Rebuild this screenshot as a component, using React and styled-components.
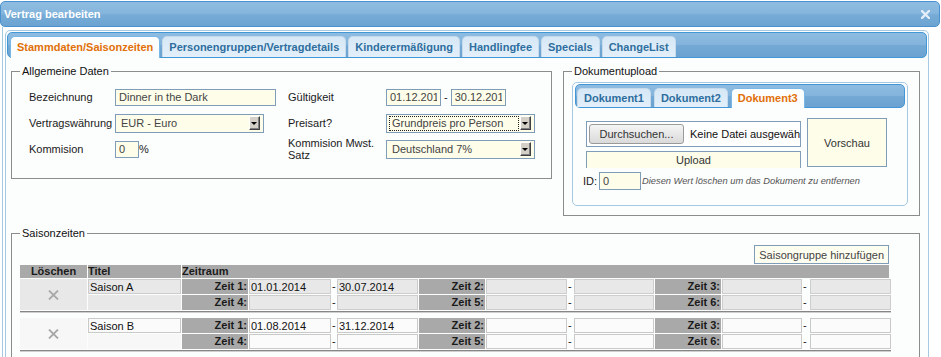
import React from "react";
import styled, { createGlobalStyle, css } from "styled-components";

const GlobalStyle = createGlobalStyle`
  * { box-sizing: border-box; }
  html, body { margin: 0; padding: 0; background: #ffffff; overflow: hidden; }
  body {
    font-family: "Liberation Sans", Arial, sans-serif;
    font-size: 11px;
    color: #1a1a1a;
  }
`;

const Dialog = styled.div`
  width: 940px;
  padding-top: 1px;
`;

const TitleBar = styled.div`
  height: 26px;
  display: flex;
  align-items: center;
  justify-content: space-between;
  padding: 0 9px 0 3px;
  border: 1px solid #4a91cf;
  border-radius: 5px;
  background: linear-gradient(to bottom, #8fbde1 0%, #86b6dd 45%, #76abd6 55%, #6ca3d2 100%);
  color: #ffffff;
  font-weight: bold;
`;

const DialogBody = styled.div`
  margin-left: 2px;
  border-left: 1px solid #a6c9e2;
  padding: 3px 0 0 2px;
`;

const Tabs = styled.div`
  width: ${p => (p.$width ? `${p.$width}px` : "auto")};
  border: 1px solid #a6c9e2;
  border-radius: 5px;
  padding: ${p => (p.$small ? "1px 2px 2px" : "1px")};
  background: #fcfdfd;
`;

const TabNav = styled.ul`
  display: flex;
  align-items: flex-end;
  gap: ${p => (p.$small ? 3 : 2)}px;
  margin: 0;
  height: ${p => (p.$small ? 24 : 26)}px;
  padding: 3px ${p => (p.$small ? 1 : 2)}px 0;
  border: 1px solid #4297d7;
  border-radius: 5px;
  background: linear-gradient(to bottom, #8ebce1 0%, #84b4dc 48%, #74a9d5 52%, #6ba2d1 100%);
`;

const Tab = styled.li`
  list-style: none;
  height: ${p => (p.$small ? 19 : 21) + (p.$active ? 1 : 0)}px;
  margin-bottom: ${p => (p.$active ? -1 : 0)}px;
  padding: 0 6px;
  border: 1px solid ${p => (p.$active ? "#79b7e7" : "#c5dbec")};
  border-bottom: 0;
  border-radius: 5px 5px 0 0;
  background: ${p => (p.$active ? "#fcfdfd" : "linear-gradient(to bottom, #d6e7f5, #e3f0fb)")};
  color: ${p => (p.$active ? "#e17009" : "#2e6e9e")};
  font-weight: bold;
  line-height: ${p => (p.$small ? 18 : 20)}px;
  white-space: nowrap;
`;

const Panel = styled.div`
  padding: 7px 7px 12px 4px;
`;

const TopRow = styled.div`
  display: flex;
  align-items: flex-start;
  gap: 11px;
`;

const Fieldset = styled.fieldset`
  margin: 0;
  min-width: 0;
  border: 1px solid #8c8c8c;
`;

const Legend = styled.legend`
  padding: 0 2px;
  line-height: 13px;
  color: #111;
`;

const GeneralSet = styled(Fieldset)`
  width: 541px;
  padding: 6px 8px 16px 8px;
`;

const DocSet = styled(Fieldset)`
  width: 357px;
  padding: 4px 11px 9px 8px;
`;

const SeasonSet = styled(Fieldset)`
  margin-top: 11px;
  padding: 5px 28px 20px 8px;
`;

const FormGrid = styled.div`
  display: grid;
  margin-left: 9px;
  grid-template-columns: 86px 173px 98px 1fr;
  grid-auto-rows: 26px;
  align-items: center;
`;

const Label = styled.div`
  line-height: 12px;
`;

const Field = styled.div`
  display: flex;
  align-items: center;
`;

const TextInput = styled.input`
  width: ${p => p.$w}px;
  height: ${p => p.$h || 17}px;
  margin: 0;
  padding: 0 3px;
  border: 1px solid #7f9db9;
  background: #fdfdea;
  font: inherit;
  color: #444;
  outline: none;
`;

const Joiner = styled.span`
  margin: 0 ${p => p.$space}px;
`;

const Select = styled.div`
  width: 149px;
  height: 19px;
  display: flex;
  align-items: center;
  padding: 1px 3px 1px 2px;
  border: 1px solid #7f9db9;
  background: #fdfdea;
  color: #444;
`;

const SelectText = styled.span`
  flex: 1;
  height: 15px;
  margin-right: 1px;
  padding-left: 2px;
  line-height: 13px;
  border: 1px ${p => (p.$focus ? "dotted #222" : "solid transparent")};
  white-space: nowrap;
  overflow: hidden;
`;

const SelectArrow = styled.span`
  flex: none;
  width: 11px;
  height: 14px;
  display: flex;
  align-items: center;
  justify-content: center;
  background: #d4d0c8;
  border: 1px solid;
  border-color: #ffffff #404040 #404040 #ffffff;
  box-shadow: inset -1px -1px 0 #808080;

  &::after {
    content: "";
    border-left: 3px solid transparent;
    border-right: 3px solid transparent;
    border-top: 3px solid #000;
    margin: 1px 1px 0 0;
  }
`;

const DocPanel = styled.div`
  padding: 10px 0 13px 0;
`;

const UploadRow = styled.div`
  display: flex;
  align-items: flex-start;
  margin-left: 11px;
`;

const UploadColumn = styled.div`
  width: 215px;
  margin-top: 3px;
  display: flex;
  flex-direction: column;
  gap: 4px;
`;

const FileBox = styled.div`
  height: 26px;
  display: flex;
  align-items: center;
  gap: 6px;
  padding: 0 2px;
  border: 1px solid #7f9db9;
  background: #ffffff;
  color: #111;
  white-space: nowrap;
  overflow: hidden;
`;

const BrowseButton = styled.button`
  flex: none;
  width: 95px;
  height: 20px;
  padding: 0;
  border: 1px solid #9a9a9a;
  border-radius: 3px;
  background: linear-gradient(to bottom, #f5f5f5, #dadada);
  font: inherit;
  color: #333;
`;

const UploadBox = styled.div`
  height: 17px;
  border: 1px solid #7f9db9;
  border-bottom: 0;
  background: #fdfdea;
  text-align: center;
  line-height: 16px;
  color: #333;
`;

const Preview = styled.div`
  width: 80px;
  height: 49px;
  margin-left: 6px;
  display: flex;
  align-items: center;
  justify-content: center;
  border: 1px solid #7f9db9;
  background: #fdfdea;
  color: #333;
`;

const IdRow = styled.div`
  display: flex;
  align-items: center;
  margin: 4px 0 0 8px;
`;

const Hint = styled.span`
  margin-left: 1px;
  font-size: 9.3px;
  font-style: italic;
  color: #555;
`;

const ActionRow = styled.div`
  display: flex;
  justify-content: flex-end;
  padding-right: 2px;
`;

const AddButton = styled.button`
  height: 19px;
  padding: 0 4px;
  border: 1px solid #7f9db9;
  background: #fdfdf0;
  font: inherit;
  color: #444;
`;

const COLUMNS = "67px 93px 66px 82px 4px 81px 66px 81px 5px 80px 66px 80px 6px 81px";

const HeadRow = styled.div`
  display: grid;
  grid-template-columns: ${COLUMNS};
  column-gap: 1px;
  margin: 1px 0 1px;
  font-weight: bold;
  line-height: 13px;
`;

const HeadCell = styled.div`
  background: #a9a9a9;
  text-align: ${p => p.$align || "left"};
  ${p => p.$wide && css`grid-column: 3 / -1; margin-right: 2px;`}
`;

const SeasonGroup = styled.div`
  display: grid;
  grid-template-columns: ${COLUMNS};
  grid-template-rows: 15px 15px;
  gap: 1px;
  padding-bottom: 1px;
  margin-bottom: 6px;
  border-bottom: 1px solid #868686;
  box-shadow: 0 1px 0 #cfcfcf;
`;

const tones = {
  grey: { cell: "#e8e8e8", input: "#e8e8e8", line: "#cdcdcd" },
  light: { cell: "#f7f7f7", input: "#fbfbfb", line: "#c9c9c9" },
};

const DeleteCell = styled.div`
  grid-row: span 2;
  display: flex;
  align-items: center;
  justify-content: center;
  background: ${p => tones[p.$tone].cell};
`;

const BlankCell = styled.div`
  background: ${p => tones[p.$tone].cell};
`;

const TimeLabel = styled.div`
  background: #a9a9a9;
  text-align: right;
  padding-right: 1px;
  font-weight: bold;
  line-height: 15px;
`;

const CellInput = styled.input`
  width: 100%;
  height: 15px;
  margin: 0;
  padding: 0 1px;
  border: 1px solid ${p => tones[p.$tone].line};
  background: ${p => tones[p.$tone].input};
  font: inherit;
  color: #111;
  outline: none;
`;

const Dash = styled.div`
  line-height: 15px;
`;

const CloseIcon = () => (
  <svg width="9" height="9" viewBox="0 0 9 9">
    <path d="M1 1 L8 8 M8 1 L1 8" stroke="#e4eef8" strokeWidth="2.3" strokeLinecap="square" />
  </svg>
);

const CrossIcon = () => (
  <svg width="11" height="10" viewBox="0 0 11 10">
    <path d="M1 0.5 L10 9.5 M10 0.5 L1 9.5" stroke="#a9a9a9" strokeWidth="1.8" />
  </svg>
);

const mainTabs = [
  "Stammdaten/Saisonzeiten",
  "Personengruppen/Vertragdetails",
  "Kinderermäßigung",
  "Handlingfee",
  "Specials",
  "ChangeList",
];

const docTabs = ["Dokument1", "Dokument2", "Dokument3"];

const seasons = [
  { title: "Saison A", tone: "grey", times: [["01.01.2014", "30.07.2014"], ["", ""], ["", ""], ["", ""], ["", ""], ["", ""]] },
  { title: "Saison B", tone: "light", times: [["01.08.2014", "31.12.2014"], ["", ""], ["", ""], ["", ""], ["", ""], ["", ""]] },
];

function TimeCells({ index, range, tone }) {
  return (
    <>
      <TimeLabel>Zeit {index + 1}:</TimeLabel>
      <CellInput $tone={tone} value={range[0]} readOnly />
      <Dash>-</Dash>
      <CellInput $tone={tone} value={range[1]} readOnly />
    </>
  );
}

function Season({ season }) {
  const { tone, times } = season;
  return (
    <SeasonGroup>
      <DeleteCell $tone={tone}><CrossIcon /></DeleteCell>
      <CellInput $tone={tone} value={season.title} readOnly />
      {times.slice(0, 3).map((r, i) => <TimeCells key={i} index={i} range={r} tone={tone} />)}
      <BlankCell $tone={tone} />
      {times.slice(3).map((r, i) => <TimeCells key={i} index={i + 3} range={r} tone={tone} />)}
    </SeasonGroup>
  );
}

export default function App() {
  return (
    <>
      <GlobalStyle />
      <Dialog>
        <TitleBar>
          <span>Vertrag bearbeiten</span>
          <CloseIcon />
        </TitleBar>
        <DialogBody>
          <Tabs $width={924}>
            <TabNav>
              {mainTabs.map((t, i) => <Tab key={t} $active={i === 0}>{t}</Tab>)}
            </TabNav>
            <Panel>
              <TopRow>
                <GeneralSet>
                  <Legend>Allgemeine Daten</Legend>
                  <FormGrid>
                    <Label>Bezeichnung</Label>
                    <Field><TextInput $w={161} value="Dinner in the Dark" readOnly /></Field>
                    <Label>Gültigkeit</Label>
                    <Field>
                      <TextInput $w={55} value="01.12.2014" readOnly />
                      <Joiner $space={3}>-</Joiner>
                      <TextInput $w={55} value="30.12.2014" readOnly />
                    </Field>

                    <Label>Vertragswährung</Label>
                    <Field>
                      <Select><SelectText>EUR - Euro</SelectText><SelectArrow /></Select>
                    </Field>
                    <Label>Preisart?</Label>
                    <Field>
                      <Select><SelectText $focus>Grundpreis pro Person</SelectText><SelectArrow /></Select>
                    </Field>

                    <Label>Kommision</Label>
                    <Field>
                      <TextInput $w={24} value="0" readOnly />
                      <span>%</span>
                    </Field>
                    <Label>Kommision Mwst. Satz</Label>
                    <Field>
                      <Select><SelectText>Deutschland 7%</SelectText><SelectArrow /></Select>
                    </Field>
                  </FormGrid>
                </GeneralSet>

                <DocSet>
                  <Legend>Dokumentupload</Legend>
                  <Tabs $small>
                    <TabNav $small>
                      {docTabs.map((t, i) => <Tab key={t} $small $active={i === 2}>{t}</Tab>)}
                    </TabNav>
                    <DocPanel>
                      <UploadRow>
                        <UploadColumn>
                          <FileBox>
                            <BrowseButton>Durchsuchen...</BrowseButton>
                            <span>Keine Datei ausgewählt.</span>
                          </FileBox>
                          <UploadBox>Upload</UploadBox>
                        </UploadColumn>
                        <Preview>Vorschau</Preview>
                      </UploadRow>
                      <IdRow>
                        <span>ID:</span>
                        <Joiner $space={1} />
                        <TextInput $w={42} $h={18} value="0" readOnly />
                        <Hint>Diesen Wert löschen um das Dokument zu entfernen</Hint>
                      </IdRow>
                    </DocPanel>
                  </Tabs>
                </DocSet>
              </TopRow>

              <SeasonSet>
                <Legend>Saisonzeiten</Legend>
                <ActionRow>
                  <AddButton>Saisongruppe hinzufügen</AddButton>
                </ActionRow>
                <HeadRow>
                  <HeadCell $align="center">Löschen</HeadCell>
                  <HeadCell>Titel</HeadCell>
                  <HeadCell $wide>Zeitraum</HeadCell>
                </HeadRow>
                {seasons.map(s => <Season key={s.title} season={s} />)}
              </SeasonSet>
            </Panel>
          </Tabs>
        </DialogBody>
      </Dialog>
    </>
  );
}
